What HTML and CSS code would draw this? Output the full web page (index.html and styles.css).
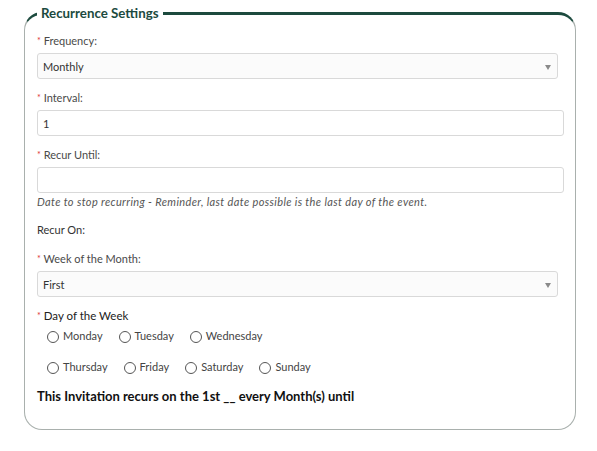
FILE: index.html
```html
<!DOCTYPE html>
<html>
<head>
<meta charset="utf-8">
<link rel="stylesheet" href="styles.css">
</head>
<body>
<fieldset class="box">
  <legend class="legend">Recurrence Settings</legend>

  <div class="field">
    <label class="label"><span class="req">*</span> Frequency:</label>
    <div class="select"><span>Monthly</span></div>
  </div>

  <div class="field">
    <label class="label"><span class="req">*</span> Interval:</label>
    <div class="input">1</div>
  </div>

  <div class="field field-help">
    <label class="label"><span class="req">*</span> Recur Until:</label>
    <div class="input"></div>
    <p class="help">Date to stop recurring - Reminder, last date possible is the last day of the event.</p>
  </div>

  <p class="section">Recur On:</p>

  <div class="field">
    <label class="label"><span class="req">*</span> Week of the Month:</label>
    <div class="select"><span>First</span></div>
  </div>

  <div class="days">
    <label class="label label-dark"><span class="req">*</span> Day of the Week</label>
    <div class="radio-row">
      <span class="radio"><span class="circle"></span>Monday</span>
      <span class="radio"><span class="circle"></span>Tuesday</span>
      <span class="radio"><span class="circle"></span>Wednesday</span>
    </div>
    <div class="radio-row">
      <span class="radio"><span class="circle"></span>Thursday</span>
      <span class="radio"><span class="circle"></span>Friday</span>
      <span class="radio"><span class="circle"></span>Saturday</span>
      <span class="radio"><span class="circle"></span>Sunday</span>
    </div>
  </div>

  <p class="summary">This Invitation recurs on the 1st __ every Month(s) until</p>
</fieldset>
</body>
</html>
```

FILE: styles.css
```css
html, body {
  margin: 0;
  padding: 0;
  background: #ffffff;
}
body {
  padding-top: 5px;
  font-family: Lato, "Noto Sans", sans-serif;
  color: #333;
}
.box {
  margin: 0 0 0 24px;
  width: 552px;
  box-sizing: border-box;
  border: 1px solid #a9b0ad;
  border-top: 3px solid #1c4a3e;
  border-radius: 18px;
  padding: 13px 11px 25px 12px;
  min-width: 0;
}
.legend {
  font-size: 13.3px;
  font-weight: 700;
  color: #1c4a3e;
  padding: 0 4px;
  margin-left: 0;
  line-height: 16px;
}
.field {
  display: flex;
  flex-direction: column;
  margin-bottom: 12px;
}
.field-help {
  margin-bottom: 14px;
}
.label {
  display: block;
  font-size: 11px;
  line-height: 14px;
  color: #4a4a4a;
  margin-bottom: 5px;
}
.label-dark {
  color: #222;
  font-size: 11.5px;
  margin-bottom: 2px;
}
.req {
  color: #d33;
  font-size: 9px;
  vertical-align: 1px;
}
.select, .input {
  box-sizing: border-box;
  height: 26px;
  border: 1px solid #d9d9d9;
  border-radius: 3px;
  background: #fff;
  font-size: 11px;
  color: #333;
  padding: 0 5px;
  display: flex;
  align-items: center;
}
.select {
  width: 521px;
  background: #fbfbfb;
  position: relative;
}
.select::after {
  content: "";
  position: absolute;
  right: 6px;
  top: 11px;
  border-left: 3.5px solid transparent;
  border-right: 3.5px solid transparent;
  border-top: 5px solid #8a8a8a;
}
.input {
  width: 527px;
}
.help {
  margin: 2px 0 0;
  font-size: 11px;
  letter-spacing: 0.37px;
  font-style: italic;
  color: #555;
  line-height: 14px;
}
.section {
  margin: 0 0 15px;
  font-size: 11px;
  line-height: 14px;
  color: #333;
}
.days {
  display: flex;
  flex-direction: column;
  gap: 11px;
}
.days .label {
  margin-bottom: -9px;
}
.radio-row {
  display: flex;
  gap: 16px;
  padding-left: 10px;
  height: 20px;
  align-items: center;
}
.radio {
  display: flex;
  align-items: center;
  gap: 4px;
  font-size: 11px;
  color: #444;
}
.radio > .circle {
  position: relative;
  top: 2px;
}
.circle {
  display: inline-block;
  width: 10px;
  height: 10px;
  border: 1px solid #555;
  border-radius: 50%;
  background: #fff;
}
.summary {
  margin: 12px 0 0;
  font-size: 13px;
  font-weight: 700;
  color: #111;
  line-height: 16px;
}
```
